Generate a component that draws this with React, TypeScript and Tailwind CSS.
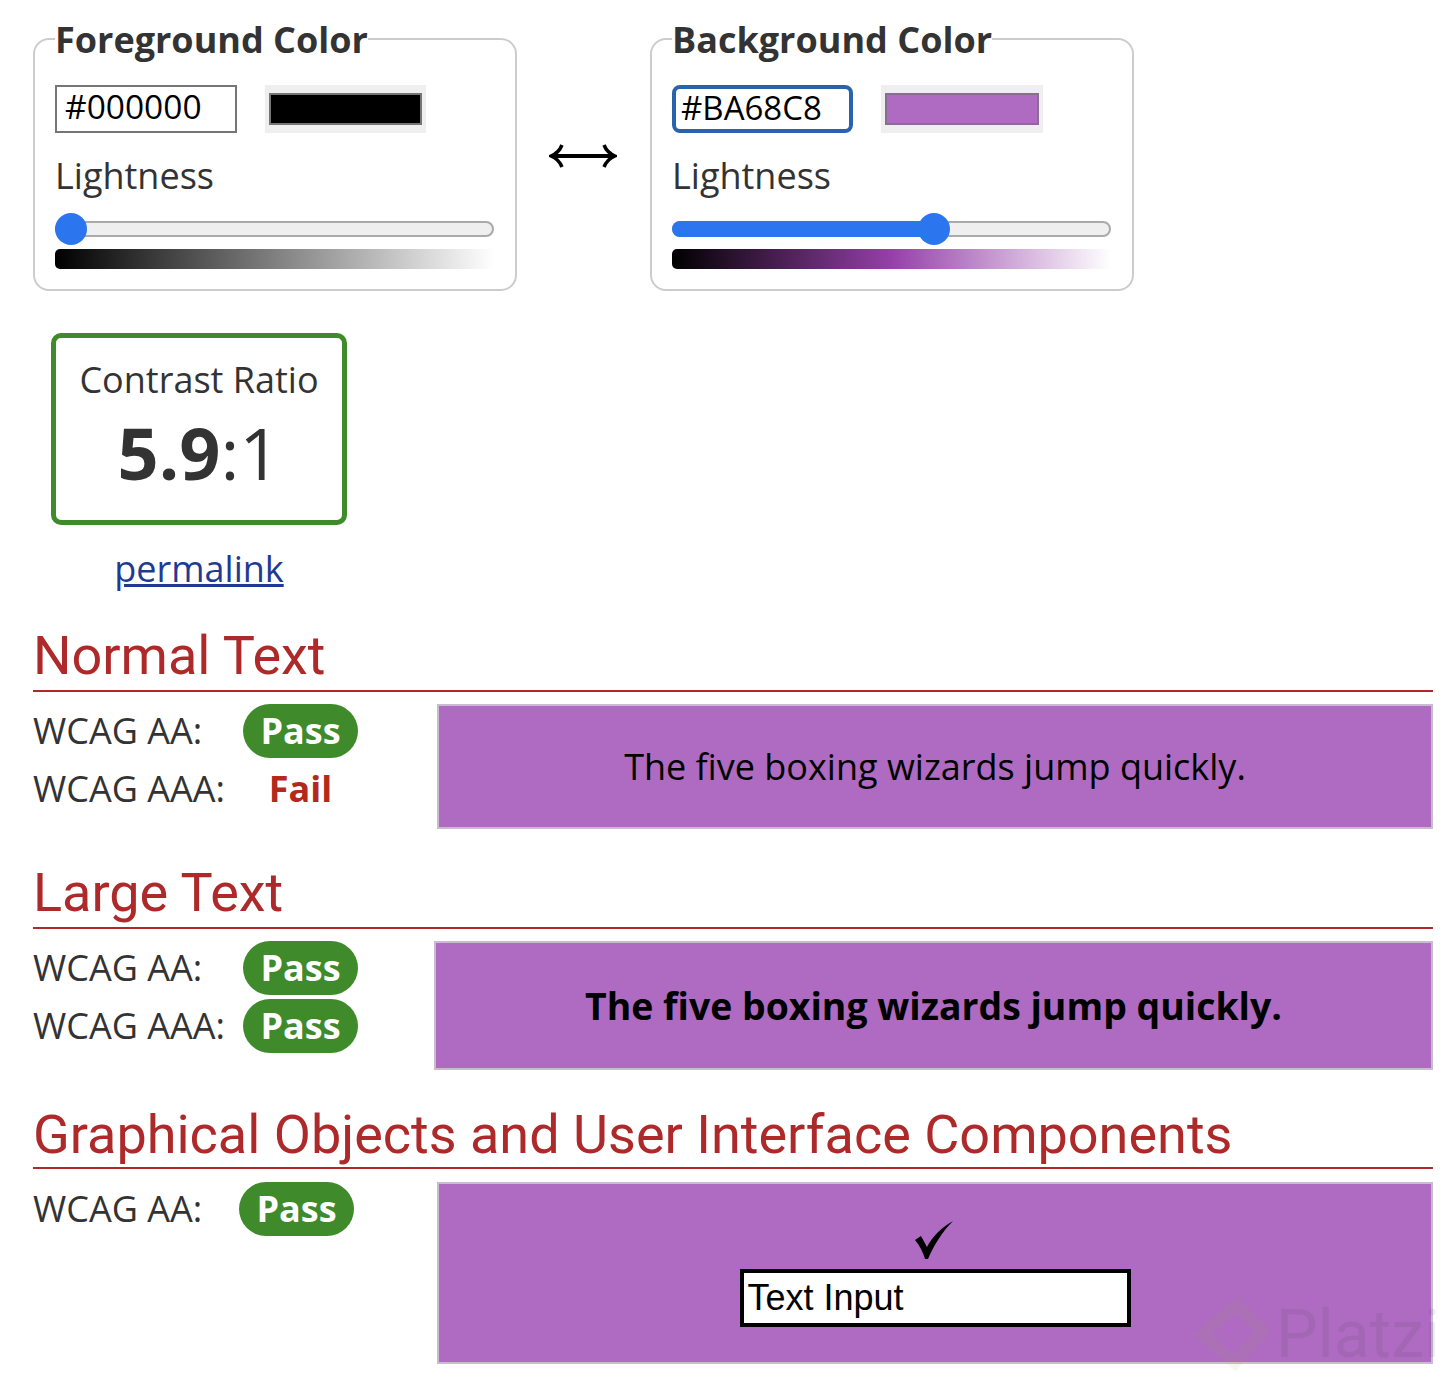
import React, { FC } from 'react';

type ColorPanelProps = {
  title: string;
  hex: string;
  swatch: string;
  gradient: string;
  percent: number;
  focused?: boolean;
};

const ColorPanel: FC<ColorPanelProps> = ({ title, hex, swatch, gradient, percent, focused }) => {
  return (
    <fieldset className="m-0 h-[275px] w-[484px] rounded-[16px] border-2 border-[#cccccc] pl-[20px] pr-[21px] pt-0">
      <legend className="ml-0 p-0 pt-[2px] text-[36px] font-bold leading-[44px] text-[#333333]">{title}</legend>
      <div className="mt-[23px] flex items-start">
        {focused ? (
          <div className="flex h-[48px] w-[181px] items-center rounded-[8px] border-4 border-[#2a63ad] pb-[4px] pl-[5px] text-[33px] leading-none text-black">
            {hex}
          </div>
        ) : (
          <div className="flex h-[48px] w-[182px] items-center border-2 border-[#767676] pb-[4px] pl-[8px] text-[33.5px] leading-none text-black">
            {hex}
          </div>
        )}
        <div className={`ml-[28px] flex h-[48px] items-start bg-[#efefef] px-[4px] pt-[8px] ${focused ? 'w-[162px]' : 'w-[161px]'}`}>
          <div className={`h-[32px] w-full border-2 ${swatch}`} />
        </div>
      </div>
      <div className="mt-[19px] text-[36px] leading-[48px] text-[#333333]">Lightness</div>
      <div className="relative mt-[21px] h-[16px] w-[439px] rounded-full border-2 border-[#aaaaaa] bg-[#efefef]">
        {percent > 0 && (
          <div
            className="absolute -inset-y-[2px] -left-[2px] rounded-full bg-[#2b76ee]"
            style={{ width: `calc(${percent}% + 12px)` }}
          />
        )}
        <div
          className="absolute -top-[10px] h-[32px] w-[32px] rounded-full bg-[#2b76ee]"
          style={{ left: `${(percent / 100) * 439 - 2}px` }}
        />
      </div>
      <div className={`mt-[12px] h-[20px] w-[439px] rounded-l-[5px] ${gradient}`} />
    </fieldset>
  );
};

const PassPill: FC = () => (
  <span className="flex h-[54px] w-[115px] items-center justify-center rounded-full bg-[#3f8a2b] text-[36px] font-bold text-white">
    Pass
  </span>
);

const Row: FC<{ label: string; children: React.ReactNode; width?: string }> = ({ label, children, width = 'w-[210px]' }) => (
  <div className="flex h-[54px] items-center">
    <span className={`${width} shrink-0 text-[36px] text-[#333333]`}>{label}</span>
    {children}
  </div>
);

const Heading: FC<{ children: React.ReactNode; className?: string }> = ({ children, className }) => (
  <h2
    className={`border-b-2 border-[#ae2a2a] font-['Roboto',sans-serif] text-[54px] font-normal leading-[62px] text-[#ae2a2a] ${className ?? ''}`}
  >
    {children}
  </h2>
);

const App: FC = () => {
  return (
    <div className="relative h-[1390px] overflow-hidden bg-white pl-[33px] pr-[19px] font-['Open_Sans',sans-serif]">
      {/* color pickers */}
      <div className="flex items-start pt-[16px]">
        <ColorPanel
          title="Foreground Color"
          hex="#000000"
          swatch="bg-black border-[#757575]"
          gradient="bg-linear-to-r/srgb from-black to-white"
          percent={0}
        />
        <div className="flex w-[133px] justify-center pr-[2px] pt-[124px]">
          <svg width="68" height="32" viewBox="0 0 68 32" fill="none" stroke="black" strokeWidth="4">
            <path d="M3 16H65" />
            <path d="M13 5C11 10 7 14 2 16C7 18 11 22 13 27" strokeWidth="3.5" />
            <path d="M55 5C57 10 61 14 66 16C61 18 57 22 55 27" strokeWidth="3.5" />
          </svg>
        </div>
        <ColorPanel
          title="Background Color"
          hex="#BA68C8"
          swatch="bg-[#ae6bc1] border-[#857091]"
          gradient="bg-linear-to-r/srgb from-black via-[#9540a8] to-white"
          percent={56}
          focused
        />
      </div>

      {/* ratio */}
      <div className="ml-[18px] mt-[42px] flex h-[192px] w-[296px] flex-col items-center rounded-[10px] border-[5px] border-[#3f8a2b] text-[#333333]">
        <div className="mt-[18px] text-[36px] leading-[48px]">Contrast Ratio</div>
        <div className="mt-[6px] text-[72px] leading-[84px]">
          <b>5.9</b>:1
        </div>
      </div>
      <div className="ml-[18px] mt-[20px] w-[296px] text-center text-[36px] leading-[48px]">
        <a href="#" className="text-[#1f3a93] underline">permalink</a>
      </div>

      {/* normal text */}
      <Heading className="mt-[32px] pb-[3px]">Normal Text</Heading>
      <div className="mt-[12px] flex items-start">
        <div className="flex w-[404px] flex-col gap-[4px]">
          <Row label="WCAG AA:"><PassPill /></Row>
          <Row label="WCAG AAA:">
            <span className="w-[115px] text-center text-[36px] font-bold text-[#b5281c]">Fail</span>
          </Row>
        </div>
        <div className="flex h-[125px] flex-1 items-center justify-center border-2 border-[#c8bcd0] bg-[#ae6bc1] text-[36px] text-black">
          The five boxing wizards jump quickly.
        </div>
      </div>

      {/* large text */}
      <Heading className="mt-[33px] pb-[3px]">Large Text</Heading>
      <div className="mt-[12px] flex items-start">
        <div className="flex w-[401px] flex-col gap-[4px]">
          <Row label="WCAG AA:"><PassPill /></Row>
          <Row label="WCAG AAA:"><PassPill /></Row>
        </div>
        <div className="flex h-[129px] flex-1 items-center justify-center border-2 border-[#c8bcd0] bg-[#ae6bc1] pt-[2px] text-[37.4px] font-bold text-black">
          The five boxing wizards jump quickly.
        </div>
      </div>

      {/* graphical objects */}
      <Heading className="mt-[34px] pb-[1px]">Graphical Objects and User Interface Components</Heading>
      <div className="mt-[13px] flex items-start">
        <div className="w-[404px]">
          <Row label="WCAG AA:" width="w-[206px]"><PassPill /></Row>
        </div>
        <div className="flex h-[182px] flex-1 flex-col items-center border-2 border-[#c8bcd0] bg-[#ae6bc1]">
          <svg className="-ml-[2px] mt-[36px]" width="40" height="40" viewBox="0 0 40 40" fill="black">
            <path d="M1 20L7 16C9 20 11 23 13 27C18 17 28 7 39 1C28 12 20 25 14 39H11C9 32 6 26 1 20Z" />
          </svg>
          <div className="mt-[9px] flex h-[58px] w-[391px] items-center border-4 border-black bg-white pl-[4px] font-['Liberation_Sans',sans-serif] text-[36px] leading-none text-black">
            Text Input
          </div>
        </div>
      </div>

      {/* watermark */}
      <div className="pointer-events-none absolute left-[1195px] top-[1295px] flex h-[80px] items-center opacity-[0.08]">
        <svg width="74" height="80" viewBox="0 0 74 80" fill="none" stroke="#9db04a" strokeWidth="12">
          <path d="M37 6L68 36L40 68L8 40L37 12" />
        </svg>
        <span className="ml-[7px] font-['Roboto',sans-serif] text-[66px] leading-none text-[#333333]">Platzi</span>
      </div>
    </div>
  );
};

export default App;
